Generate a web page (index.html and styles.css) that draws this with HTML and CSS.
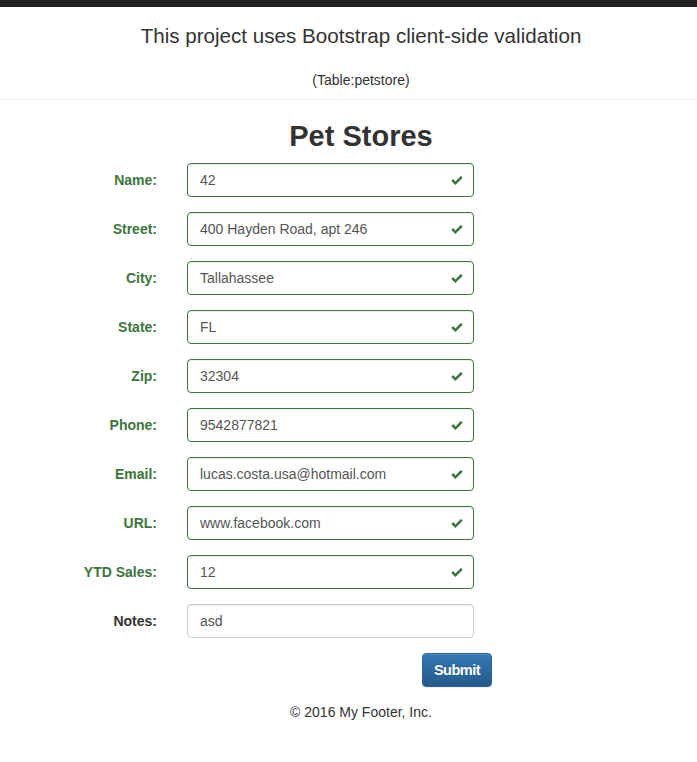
FILE: index.html
```html
<!DOCTYPE html>
<html>
<head>
<meta charset="utf-8">
<link rel="stylesheet" href="styles.css">
</head>
<body>
<div class="topbar"></div>
<div class="header">
  <div class="lead">This project uses Bootstrap client-side validation</div>
  <div class="sub">(Table:petstore)</div>
</div>
<div class="main">
  <h2 class="title">Pet Stores</h2>
  <form class="form">
    <div class="row ok"><label>Name:</label><div class="field"><input value="42"><svg class="check" viewBox="0 0 12 9"><path d="M0.3 4.6 L2.1 2.8 L4.4 5.1 L9.9 -0.4 L11.7 1.4 L4.4 8.7 Z" transform="translate(0 0.3)"/></svg></div></div>
    <div class="row ok"><label>Street:</label><div class="field"><input value="400 Hayden Road, apt 246"><svg class="check" viewBox="0 0 12 9"><path d="M0.3 4.6 L2.1 2.8 L4.4 5.1 L9.9 -0.4 L11.7 1.4 L4.4 8.7 Z" transform="translate(0 0.3)"/></svg></div></div>
    <div class="row ok"><label>City:</label><div class="field"><input value="Tallahassee"><svg class="check" viewBox="0 0 12 9"><path d="M0.3 4.6 L2.1 2.8 L4.4 5.1 L9.9 -0.4 L11.7 1.4 L4.4 8.7 Z" transform="translate(0 0.3)"/></svg></div></div>
    <div class="row ok"><label>State:</label><div class="field"><input value="FL"><svg class="check" viewBox="0 0 12 9"><path d="M0.3 4.6 L2.1 2.8 L4.4 5.1 L9.9 -0.4 L11.7 1.4 L4.4 8.7 Z" transform="translate(0 0.3)"/></svg></div></div>
    <div class="row ok"><label>Zip:</label><div class="field"><input value="32304"><svg class="check" viewBox="0 0 12 9"><path d="M0.3 4.6 L2.1 2.8 L4.4 5.1 L9.9 -0.4 L11.7 1.4 L4.4 8.7 Z" transform="translate(0 0.3)"/></svg></div></div>
    <div class="row ok"><label>Phone:</label><div class="field"><input value="9542877821"><svg class="check" viewBox="0 0 12 9"><path d="M0.3 4.6 L2.1 2.8 L4.4 5.1 L9.9 -0.4 L11.7 1.4 L4.4 8.7 Z" transform="translate(0 0.3)"/></svg></div></div>
    <div class="row ok"><label>Email:</label><div class="field"><input value="lucas.costa.usa@hotmail.com"><svg class="check" viewBox="0 0 12 9"><path d="M0.3 4.6 L2.1 2.8 L4.4 5.1 L9.9 -0.4 L11.7 1.4 L4.4 8.7 Z" transform="translate(0 0.3)"/></svg></div></div>
    <div class="row ok"><label>URL:</label><div class="field"><input value="www.facebook.com"><svg class="check" viewBox="0 0 12 9"><path d="M0.3 4.6 L2.1 2.8 L4.4 5.1 L9.9 -0.4 L11.7 1.4 L4.4 8.7 Z" transform="translate(0 0.3)"/></svg></div></div>
    <div class="row ok"><label>YTD Sales:</label><div class="field"><input value="12"><svg class="check" viewBox="0 0 12 9"><path d="M0.3 4.6 L2.1 2.8 L4.4 5.1 L9.9 -0.4 L11.7 1.4 L4.4 8.7 Z" transform="translate(0 0.3)"/></svg></div></div>
    <div class="row"><label>Notes:</label><div class="field"><input value="asd"></div></div>
    <div class="actions"><button type="button" class="btn">Submit</button></div>
  </form>
  <div class="footer">© 2016 My Footer, Inc.</div>
</div>
</body>
</html>
```

FILE: styles.css
```css
html, body {
  margin: 0;
  padding: 0;
  background: #fff;
}
body {
  font-family: "Liberation Sans", Arial, sans-serif;
  font-size: 14px;
  line-height: 20px;
  color: #333;
}
.topbar {
  height: 7px;
  background: #222;
}
.header {
  padding: 18px 0 9px 25px;
  text-align: center;
  border-bottom: 1px solid #eee;
}
.lead {
  font-size: 20.6px;
  line-height: 22px;
  font-weight: 300;
  color: #333;
}
.sub {
  margin-top: 23px;
  font-size: 14px;
  line-height: 20px;
}
.main {
  padding-left: 25px;
}
.title {
  margin: 20px 0 10px 0;
  text-align: center;
  font-size: 29px;
  line-height: 33px;
  font-weight: bold;
  color: #333;
}
.form {
  margin-left: -25px;
}
.row {
  display: grid;
  grid-template-columns: 157px 287px;
  column-gap: 30px;
  align-items: center;
  margin-bottom: 15px;
}
.row label {
  text-align: right;
  font-weight: bold;
  color: #333;
}
.row.ok label {
  color: #3c763d;
}
.field {
  position: relative;
  height: 34px;
}
.field input {
  box-sizing: border-box;
  width: 287px;
  height: 34px;
  padding: 6px 12px;
  border: 1px solid #ccc;
  border-radius: 4px;
  font-family: "Liberation Sans", Arial, sans-serif;
  font-size: 14px;
  color: #555;
  background: #fff;
  box-shadow: inset 0 1px 1px rgba(0,0,0,0.075);
  outline: none;
  margin: 0;
}
.row.ok .field input {
  border-color: #3c763d;
  padding-right: 42px;
}
.check {
  position: absolute;
  left: 264px;
  top: 13px;
  width: 12px;
  height: 9px;
  fill: #3c763d;
}
.actions {
  padding-left: 422px;
}
.btn {
  width: 70px;
  height: 34px;
  padding: 0;
  border: 1px solid #2b669a;
  border-radius: 4px;
  background: linear-gradient(to bottom, #337ab7 0%, #265a88 100%);
  color: #fff;
  font-family: "Liberation Sans", Arial, sans-serif;
  font-size: 14.5px;
  font-weight: bold;
  letter-spacing: -0.5px;
  text-shadow: 0 -1px 0 rgba(0,0,0,0.2);
  box-shadow: inset 0 1px 0 rgba(255,255,255,0.15), 0 1px 1px rgba(0,0,0,0.075);
  cursor: pointer;
}
.footer {
  margin-top: 15px;
  text-align: center;
  line-height: 20px;
}
```
